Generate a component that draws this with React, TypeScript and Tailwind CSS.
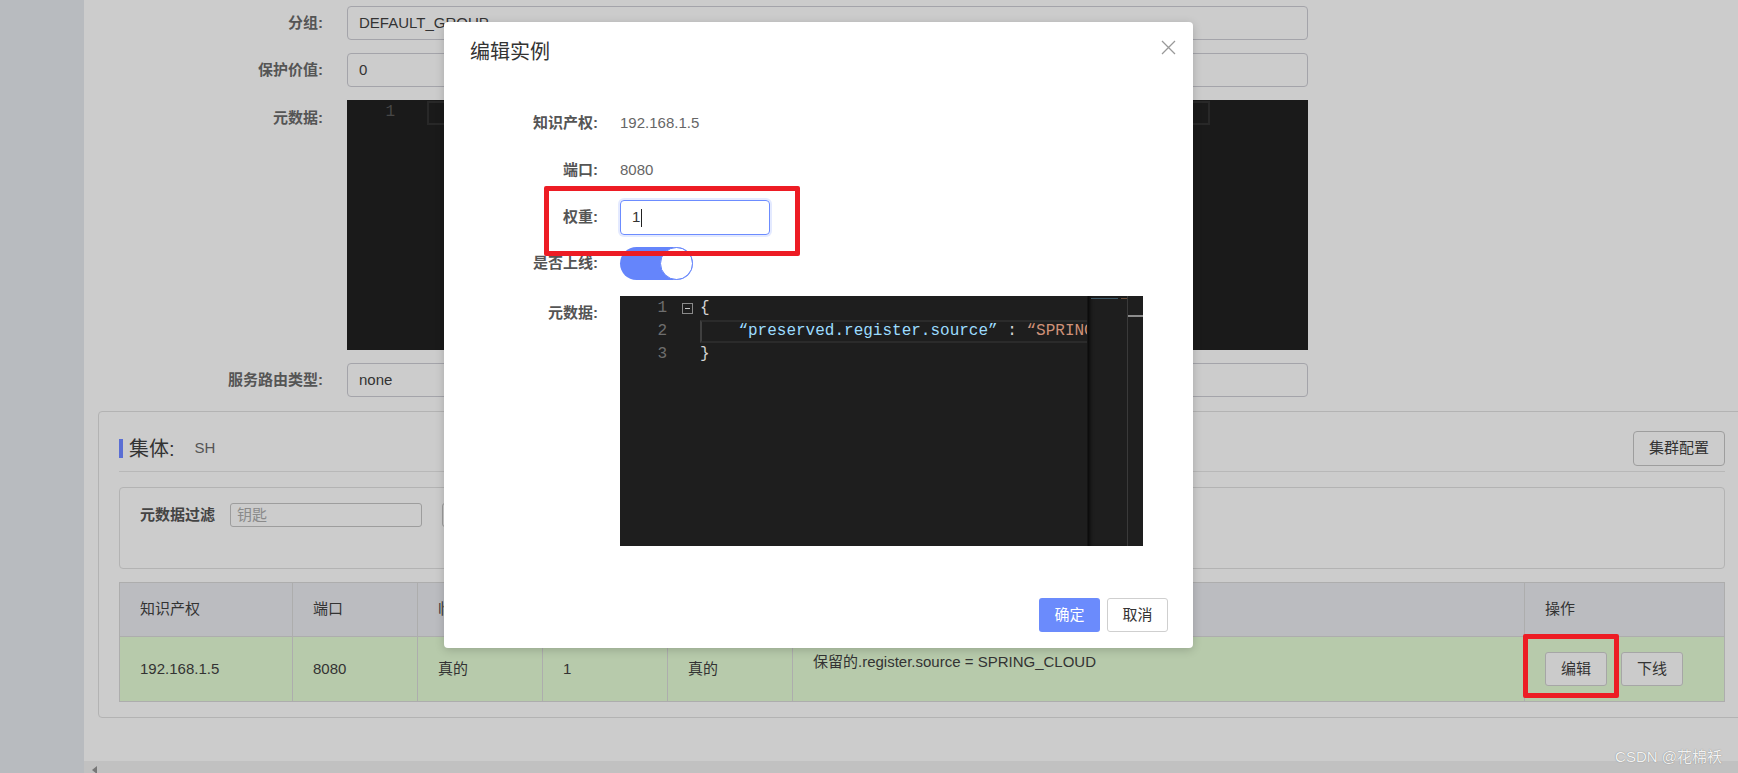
const columns = ["知识产权", "端口", "临时实例", "权重", "健康", "元数据", "操作"];

function FormLabel({ children, top }: { children: React.ReactNode; top?: boolean }) {
  return (
    <div
      className={
        top
          ? "pt-[8px] text-right font-bold leading-[20px] text-[#555]"
          : "text-right font-bold leading-[34px] text-[#555]"
      }
    >
      {children}
    </div>
  );
}

function FormInput({ value }: { value: string }) {
  return (
    <div className="flex h-[34px] items-center rounded-[4px] border border-[#a4a4aa] px-[11px] text-[#333]">
      {value}
    </div>
  );
}

function CodeEditor() {
  return (
    <div className="relative flex h-[250px] w-[523px] bg-[#1e1e1e] pt-[1px] font-['Liberation_Mono',monospace] text-[16px] leading-[23px]">
      {/* gutter */}
      <div className="flex w-[80px] shrink-0 flex-col">
        {[1, 2, 3].map((n) => (
          <div key={n} className="flex h-[23px] items-center">
            <span className="w-[47px] text-right text-[#6e6e6e]">{n}</span>
            {n === 1 && (
              <span className="ml-[15px] flex h-[11px] w-[11px] items-center justify-center border border-[#8a8a8a]">
                <span className="h-[1px] w-[5px] bg-[#c5c5c5]" />
              </span>
            )}
          </div>
        ))}
      </div>

      {/* code */}
      <div className="w-[387px] shrink-0 overflow-hidden whitespace-pre text-[#d4d4d4]">
        <div className="h-[23px]">{"{"}</div>
        <div className="relative h-[23px]">
          <div className="absolute inset-0 w-[600px] border-2 border-[#2b2b2b] border-l-[#3f3f3f]" />
          <span>{"    "}</span>
          <span className="text-[#9cdcfe]">“preserved.register.source”</span>
          <span>{" : "}</span>
          <span className="text-[#ce9178]">“SPRING_CLOUD”</span>
        </div>
        <div className="h-[23px]">{"}"}</div>
      </div>

      {/* minimap */}
      <div className="-mt-[1px] w-[40px] shrink-0 border-l border-[#141414] shadow-[inset_4px_0_5px_-3px_#000]">
        <div className="ml-[3px] mt-[2px] flex items-center">
          <span className="h-[1px] w-[27px] bg-[#3f5866]" />
          <span className="ml-[3px] h-[1px] w-[6px] bg-[#6a5040]" />
        </div>
      </div>

      {/* overview ruler */}
      <div className="-mt-[1px] w-[16px] shrink-0 border-l border-[#3a3a3a]">
        <div className="mt-[19px] h-[2px] bg-[#8c8c8c]" />
      </div>
    </div>
  );
}

export default function App() {
  return (
    <div className="relative flex h-[773px] w-[1738px] overflow-hidden bg-[#cccccc] font-['Liberation_Sans','Noto_Sans_CJK_SC',sans-serif] text-[15px] text-[#333]">
      {/* Sidebar */}
      <div className="w-[84px] shrink-0 bg-[#b8bbbf]" />

      <div className="flex min-w-0 flex-1 flex-col">
        {/* Service form */}
        <div className="grid grid-cols-[239px_961px] gap-x-[24px] gap-y-[13px] pt-[6px]">
          <FormLabel>分组:</FormLabel>
          <FormInput value="DEFAULT_GROUP" />
          <FormLabel>保护价值:</FormLabel>
          <FormInput value="0" />
          <FormLabel top>元数据:</FormLabel>
          <div className="flex h-[250px] bg-[#1a1a1a] font-['Liberation_Mono',monospace] text-[16px] leading-[23px]">
            <span className="w-[48px] pt-[1px] text-right text-[#474747]">1</span>
            <div className="ml-[32px] mt-[1px] h-[24px] w-[783px] border-2 border-[#282828]" />
          </div>
          <FormLabel>服务路由类型:</FormLabel>
          <FormInput value="none" />
        </div>

        {/* Cluster card */}
        <div className="ml-[14px] mt-[14px] w-[1648px] shrink-0 rounded-[4px] border border-[#b3b3b3] px-[20px] pb-[15px] pt-[19px]">
          <div className="flex items-center justify-between border-b border-[#b8b8b8] pb-[5px]">
            <div className="flex items-center">
              <span className="h-[19px] w-[4px] bg-[#5a6ed4]" />
              <span className="ml-[6px] text-[20px] leading-[24px] text-[#333]">集体:</span>
              <span className="ml-[20px] text-[15px] text-[#555]">SH</span>
            </div>
            <button className="h-[35px] w-[92px] rounded-[4px] border border-[#9e9e9e] text-[15px] text-[#333]">
              集群配置
            </button>
          </div>

          {/* Filter box */}
          <div className="mt-[15px] flex h-[82px] items-start rounded-[4px] border border-[#b3b3b3] px-[20px] pt-[15px]">
            <span className="font-bold leading-[24px] text-[#444]">元数据过滤</span>
            <div className="ml-[15px] flex h-[24px] w-[192px] items-center rounded-[3px] border border-[#9d9d9d] px-[6px] text-[#8a8a8a]">
              钥匙
            </div>
            <div className="ml-[20px] flex h-[24px] w-[192px] items-center rounded-[3px] border border-[#9d9d9d] px-[6px] text-[#8a8a8a]">
              价值
            </div>
          </div>

          {/* Instance table */}
          <div className="mt-[13px] grid grid-cols-[173px_125px_125px_125px_125px_732px_200px] border-l border-t border-[#adadad]">
            {columns.map((c) => (
              <div
                key={c}
                className="flex h-[54px] items-center border-b border-r border-[#adadad] bg-[#bbbcc0] px-[20px] text-[#333]"
              >
                {c}
              </div>
            ))}
            <div className="flex h-[65px] items-center border-b border-r border-[#adadad] bg-[#b7caab] px-[20px]">192.168.1.5</div>
            <div className="flex h-[65px] items-center border-b border-r border-[#adadad] bg-[#b7caab] px-[20px]">8080</div>
            <div className="flex h-[65px] items-center border-b border-r border-[#adadad] bg-[#b7caab] px-[20px]">真的</div>
            <div className="flex h-[65px] items-center border-b border-r border-[#adadad] bg-[#b7caab] px-[20px]">1</div>
            <div className="flex h-[65px] items-center border-b border-r border-[#adadad] bg-[#b7caab] px-[20px]">真的</div>
            <div className="h-[65px] border-b border-r border-[#adadad] bg-[#b7caab] px-[20px] pt-[15px] leading-[20px]">
              保留的.register.source = SPRING_CLOUD
            </div>
            <div className="flex h-[65px] items-center gap-[14px] border-b border-r border-[#adadad] bg-[#b7caab] px-[20px]">
              <button className="h-[34px] w-[62px] rounded-[3px] border border-[#a6a6a6] bg-[#cbcbcb] text-[#333]">编辑</button>
              <button className="h-[34px] w-[62px] rounded-[3px] border border-[#a6a6a6] bg-[#cbcbcb] text-[#333]">下线</button>
            </div>
          </div>
        </div>

        {/* Horizontal scrollbar */}
        <div className="mt-auto flex h-[12px] shrink-0 items-start bg-[#c1c1c1] pl-[8px] pt-[5px]">
          <span className="h-0 w-0 border-y-[4px] border-r-[5px] border-y-transparent border-r-[#777]" />
        </div>
      </div>

      {/* Edit instance dialog */}
      <div className="absolute left-[444px] top-[22px] flex h-[626px] w-[749px] flex-col rounded-[4px] bg-white shadow-[0_2px_10px_rgba(0,0,0,0.18)]">
        <div className="px-[26px] pt-[18px] text-[20px] leading-[24px] text-[#333]">编辑实例</div>
        <button className="absolute right-[17px] top-[18px] h-[15px] w-[15px]">
          <svg viewBox="0 0 15 15" className="h-[15px] w-[15px]">
            <path d="M1 1 L14 14 M14 1 L1 14" stroke="#999" strokeWidth="1.3" fill="none" />
          </svg>
        </button>

        <div className="mt-[42px] flex flex-col gap-[12px]">
          <div className="grid h-[35px] grid-cols-[154px_1fr] items-center gap-x-[22px]">
            <span className="text-right font-bold text-[#555]">知识产权:</span>
            <span className="text-[#666]">192.168.1.5</span>
          </div>
          <div className="grid h-[35px] grid-cols-[154px_1fr] items-center gap-x-[22px]">
            <span className="text-right font-bold text-[#555]">端口:</span>
            <span className="text-[#666]">8080</span>
          </div>
          <div className="grid h-[35px] grid-cols-[154px_1fr] items-center gap-x-[22px]">
            <span className="text-right font-bold text-[#555]">权重:</span>
            <div className="flex h-[35px] w-[150px] items-center rounded-[4px] border border-[#6c8cff] pl-[11px] text-[#333] shadow-[0_0_0_2px_rgba(108,140,255,0.18)]">
              <span>1</span>
              <span className="ml-[1px] h-[18px] w-[1px] bg-[#222]" />
            </div>
          </div>
          <div className="grid h-[33px] grid-cols-[154px_1fr] items-center gap-x-[22px]">
            <span className="text-right font-bold text-[#555]">是否上线:</span>
            <div className="flex h-[33px] w-[73px] justify-end rounded-full bg-[#6585fb]">
              <span className="h-[33px] w-[33px] rounded-full border-[1.5px] border-[#6585fb] bg-white" />
            </div>
          </div>
          <div className="mt-[4px] grid grid-cols-[154px_1fr] items-start gap-x-[22px]">
            <span className="pt-[7px] text-right font-bold leading-[20px] text-[#555]">元数据:</span>
            <CodeEditor />
          </div>
        </div>

        <div className="mt-auto flex justify-end gap-[7px] pb-[16px] pr-[25px]">
          <button className="h-[34px] w-[61px] rounded-[3px] bg-[#6b8bfc] text-white">确定</button>
          <button className="h-[34px] w-[61px] rounded-[3px] border border-[#cfcfcf] bg-white text-[#333]">取消</button>
        </div>
      </div>

      {/* Red annotation boxes */}
      <div className="absolute left-[544px] top-[186px] h-[70px] w-[256px] rounded-[2px] border-[5px] border-[#ed1c24]" />
      <div className="absolute left-[1523px] top-[634px] h-[64px] w-[96px] rounded-[2px] border-[5px] border-[#ed1c24]" />

      {/* Watermark */}
      <div className="absolute bottom-[7px] right-[16px] text-[15px] leading-[18px] text-[#f2f2f2] [text-shadow:0_0_1px_#6f6f6f]">
        CSDN @花棉袄
      </div>
    </div>
  );
}
